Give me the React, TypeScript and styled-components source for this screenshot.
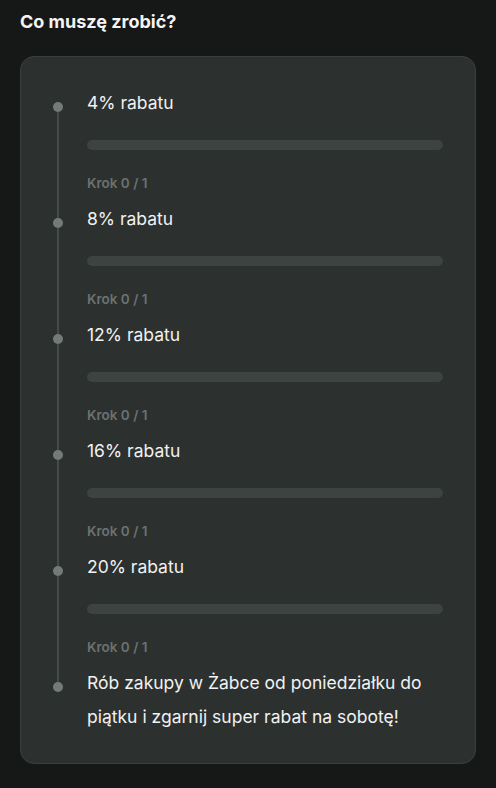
import React, { ReactElement } from 'react';
import styled, { createGlobalStyle } from 'styled-components';

const GlobalStyle = createGlobalStyle`
  html, body {
    margin: 0;
    padding: 0;
    background: #161818;
  }
  body {
    font-family: Inter, "Noto Sans", sans-serif;
    -webkit-font-smoothing: antialiased;
  }
`;

const Page = styled.div`
  width: 496px;
  min-height: 788px;
  box-sizing: border-box;
  padding: 10px 20px 24px;
  background: #161818;
`;

const Heading = styled.h2`
  margin: 0 0 23px;
  font-size: 18px;
  line-height: 23px;
  font-weight: 700;
  color: #f4f4f4;
  letter-spacing: 0;
`;

const Card = styled.div`
  box-sizing: border-box;
  width: 456px;
  background: #2c302f;
  border: 1px solid #3a3e3d;
  border-radius: 14px;
  padding: 29px 32px 29px 27px;
  display: flex;
  flex-direction: column;
`;

const Step = styled.div`
  display: grid;
  grid-template-columns: 20px 1fr;
  column-gap: 19px;
`;

const Rail = styled.div`
  display: flex;
  flex-direction: column;
  align-items: center;
`;

const Segment = styled.div<{ $hidden?: boolean; $grow?: boolean }>`
  width: 2px;
  background: ${({ $hidden }) => ($hidden ? 'transparent' : '#454b4a')};
  height: ${({ $grow }) => ($grow ? 'auto' : '16px')};
  flex: ${({ $grow }) => ($grow ? '1' : 'none')};
`;

const Dot = styled.div`
  width: 10px;
  height: 10px;
  border-radius: 50%;
  background: #737b7a;
  flex: none;
`;

const Content = styled.div<{ $last?: boolean }>`
  display: flex;
  flex-direction: column;
  padding-bottom: ${({ $last }) => ($last ? '0' : '9px')};
`;

const Title = styled.div`
  font-size: 17.5px;
  line-height: 34px;
  color: #f1f2f2;
  font-weight: 400;
`;

const Bar = styled.div`
  margin-top: 20px;
  height: 10px;
  border-radius: 5px;
  background: #3d4341;
`;

const StepLabel = styled.div`
  margin-top: 23px;
  font-size: 13.5px;
  line-height: 20px;
  font-weight: 600;
  color: #6c7270;
`;

const steps = ['4% rabatu', '8% rabatu', '12% rabatu', '16% rabatu', '20% rabatu'];

export default function App(): ReactElement {
  return (
    <Page>
      <GlobalStyle />
      <Heading>Co muszę zrobić?</Heading>
      <Card>
        {steps.map((s, i) => (
          <Step key={s}>
            <Rail>
              <Segment $hidden={i === 0} />
              <Dot />
              <Segment $grow />
            </Rail>
            <Content>
              <Title>{s}</Title>
              <Bar />
              <StepLabel>Krok 0 / 1</StepLabel>
            </Content>
          </Step>
        ))}
        <Step>
          <Rail>
            <Segment />
            <Dot />
          </Rail>
          <Content $last>
            <Title>
              Rób zakupy w Żabce od poniedziałku do piątku i zgarnij super
              rabat na sobotę!
            </Title>
          </Content>
        </Step>
      </Card>
    </Page>
  );
}
